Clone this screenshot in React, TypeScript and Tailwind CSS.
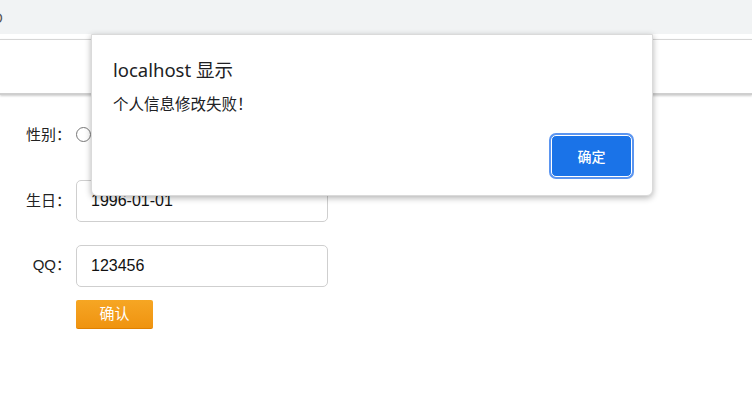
import React from 'react';

function FormRow({ label, children, labelClass = '' }: { label: string; children: React.ReactNode; labelClass?: string }) {
  return (
    <div className="flex items-center">
      <div className={`w-[71px] text-right text-[15px] text-[#222] ${labelClass}`}>{label}</div>
      <div className="ml-[5px]">{children}</div>
    </div>
  );
}

function Field({ value }: { value: string }) {
  return (
    <div className="w-[252px] h-[42px] rounded-[5px] border border-[#cfcfcf] bg-white flex items-center pl-[14px] text-[16px] text-[#111] font-['Liberation_Sans',sans-serif]">
      {value}
    </div>
  );
}

export default function App() {
  return (
    <div className="relative w-[752px] h-[393px] bg-white overflow-hidden font-['Noto_Sans','Noto_Sans_CJK_SC',sans-serif]">
      {/* browser strip */}
      <div className="h-[34px] bg-[#f1f3f4] flex items-center overflow-hidden">
        <span className="-ml-[8px] text-[14px] text-[#555]">O</span>
      </div>
      <div className="h-[5px]" />
      {/* header bar */}
      <div className="h-[56px] border-t border-[#d6d6d6] border-b-2 border-b-[#cfcfcf] shadow-[0_1px_2px_rgba(0,0,0,0.2)]" />

      {/* form */}
      <div className="pt-[28px] flex flex-col">
        <FormRow label="性别：">
          <div className="flex items-center gap-2 h-[20px]">
            <span className="w-[15px] h-[15px] rounded-full border border-[#777] bg-white" />
            <span className="text-[14px] text-[#333]">男</span>
          </div>
        </FormRow>
        <div className="h-[34px]" />
        <FormRow label="生日：">
          <Field value="1996-01-01" />
        </FormRow>
        <div className="h-[23px]" />
        <FormRow label="QQ：" labelClass="font-['Liberation_Sans','Noto_Sans_CJK_SC',sans-serif] text-[13px]">
          <Field value="123456" />
        </FormRow>
        <div className="h-[13px]" />
        <div className="ml-[76px]">
          <button className="w-[77px] h-[29px] rounded-[2px] bg-gradient-to-b from-[#f6a623] to-[#ef930f] border-b border-[#e08000] text-white text-[15px]">
            确认
          </button>
        </div>
      </div>

      {/* alert dialog */}
      <div className="absolute left-[91px] top-[34px] w-[562px] h-[162px] bg-white rounded-b-[6px] border border-[#dadada] shadow-[0_2px_6px_rgba(0,0,0,0.3)] flex flex-col">
        <div className="pl-[21px] pt-[23px] text-[18.5px] leading-[24px] text-[#202124]">localhost 显示</div>
        <div className="pl-[21px] pt-[11px] text-[15.5px] leading-[22px] text-[#202124]">个人信息修改失败！</div>
        <div className="flex-1 flex justify-end items-start pr-[20px] pt-[20px]">
          <button className="w-[81px] h-[42px] rounded-[5px] bg-[#1a73e8] text-white text-[14px] font-medium ring-2 ring-[#5b95f0] border-[1.5px] border-white">
            确定
          </button>
        </div>
      </div>
    </div>
  );
}
